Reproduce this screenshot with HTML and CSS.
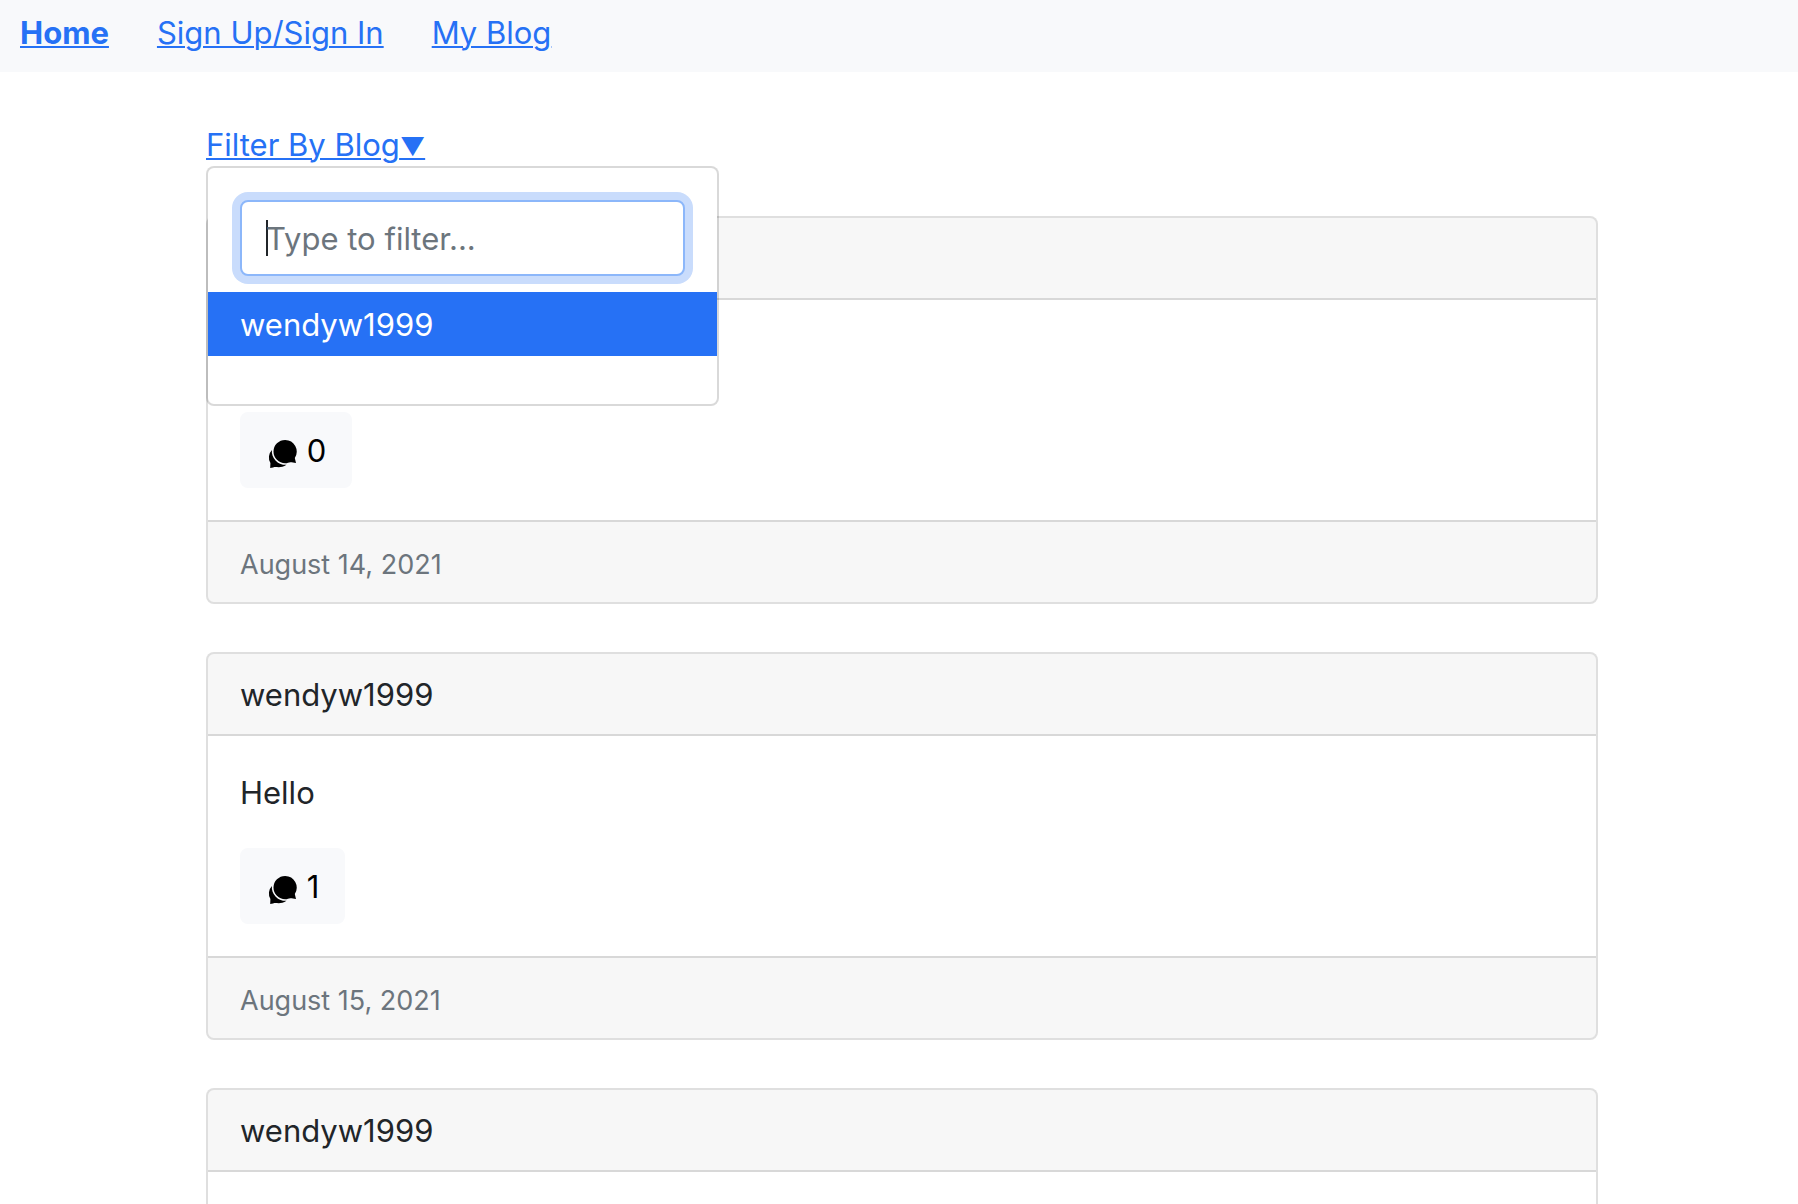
FILE: index.html
```html
<!DOCTYPE html>
<html lang="en">
<head>
  <meta charset="utf-8">
  <meta name="viewport" content="width=device-width, initial-scale=1">
  <title>Blogs</title>
  <link rel="stylesheet" href="styles.css">
</head>
<body>
  <svg class="sprite" aria-hidden="true">
    <symbol id="icon-chat" viewBox="1 0 32 32">
      <path d="M20.200 3.900A11.700 11.700 0 1 0 20.200 27.300C22.500 27.300 23.600 26.200 25.400 26.200C27 26.200 28.800 26.700 31 27L29.800 21.900A11.700 11.700 0 0 0 20.200 3.900Z"/>
      <path d="M6.900 13.900A11 11 0 0 0 5.400 27L5.200 32C7.200 31.700 9 31 10.500 31C12.500 31 17 32 21.500 28.800A13.600 13.600 0 0 1 6.900 13.900Z"/>
    </symbol>
  </svg>

  <nav class="topbar">
    <a class="topbar-link active" href="#">Home</a>
    <a class="topbar-link" href="#">Sign Up/Sign In</a>
    <a class="topbar-link" href="#">My Blog</a>
  </nav>

  <main class="container">
    <div class="dropdown">
      <a class="dropdown-toggle" href="#">Filter By Blog<span class="caret">▼</span></a>
      <div class="dropdown-menu">
        <input class="filter-input" type="text" placeholder="Type to filter..." aria-label="Filter blogs">
        <ul class="dropdown-list">
          <li><a class="dropdown-item active" href="#">wendyw1999</a></li>
        </ul>
      </div>
    </div>

    <article class="card">
      <header class="card-header">wendyw1999</header>
      <div class="card-body">
        <p class="card-text"></p>
        <button class="btn" type="button"><svg class="icon" aria-hidden="true"><use href="#icon-chat"/></svg> 0</button>
      </div>
      <footer class="card-footer">August 14, 2021</footer>
    </article>

    <article class="card">
      <header class="card-header">wendyw1999</header>
      <div class="card-body">
        <p class="card-text">Hello</p>
        <button class="btn" type="button"><svg class="icon" aria-hidden="true"><use href="#icon-chat"/></svg> 1</button>
      </div>
      <footer class="card-footer">August 15, 2021</footer>
    </article>

    <article class="card">
      <header class="card-header">wendyw1999</header>
      <div class="card-body">
        <p class="card-text"></p>
      </div>
    </article>
  </main>
</body>
</html>
```
FILE: styles.css
```css
*,
*::before,
*::after {
  box-sizing: border-box;
}

body {
  margin: 0;
  background: #fff;
  color: #212529;
  font-family: Inter, "Liberation Sans", sans-serif;
  font-size: 31px;
  line-height: 48px;
}

a {
  color: #2671f5;
  text-decoration: underline;
  text-decoration-thickness: 2px;
  text-underline-offset: 2px;
}

.sprite {
  display: none;
}

.topbar {
  display: flex;
  gap: 48px;
  padding: 9px 20px 15px;
  background: #f8f9fb;
}

.topbar-link.active {
  font-weight: 700;
}

.container {
  max-width: 1446px;
  margin: 0 auto;
  padding: 49px 24px 48px 30px;
}

.dropdown {
  position: relative;
  height: 48px;
  margin-bottom: 47px;
}

.caret {
  font-size: 25px;
  line-height: 1;
}

.dropdown-menu {
  position: absolute;
  top: 100%;
  left: 0;
  z-index: 10;
  width: 513px;
  margin-top: -3px;
  padding: 16px 0;
  border: 2px solid rgba(0, 0, 0, 0.15);
  border-radius: 8px;
  background: #fff;
  background-clip: padding-box;
}

.filter-input {
  display: block;
  width: calc(100% - 64px);
  height: 76px;
  margin: 16px 32px;
  padding: 12px 24px;
  border: 2px solid #8cb7fa;
  border-radius: 8px;
  outline: none;
  /* text cursor of the focused field */
  background: #fff linear-gradient(#212529, #212529) 24px 50% / 2px 36px no-repeat;
  box-shadow: 0 0 0 8px #c9dcfc;
  color: #212529;
  font: inherit;
}

.filter-input::placeholder {
  color: #6c757d;
  opacity: 1;
}

.dropdown-list {
  margin: 0 0 32px;
  padding: 0;
  list-style: none;
}

.dropdown-item {
  display: block;
  padding: 9px 32px 7px;
  text-decoration: none;
}

.dropdown-item.active {
  background: #2671f5;
  color: #fff;
}

.card {
  margin-bottom: 48px;
  border: 2px solid rgba(0, 0, 0, 0.125);
  border-radius: 8px;
  background: #fff;
}

.card-header,
.card-footer {
  padding: 17px 32px 15px;
  background: rgba(0, 0, 0, 0.03);
}

.card-header {
  border-bottom: 2px solid rgba(0, 0, 0, 0.125);
  border-radius: 6px 6px 0 0;
}

.card-footer {
  padding: 19px 32px 13px;
  border-top: 2px solid rgba(0, 0, 0, 0.125);
  border-radius: 0 0 6px 6px;
  color: #6c757d;
  font-size: 27px;
}

.card-body {
  padding: 33px 32px 32px;
}

.card-text {
  min-height: 48px;
  margin: 0 0 31px;
}

.btn {
  display: block;
  padding: 13px 24px 11px;
  border: 2px solid #f8f9fb;
  border-radius: 8px;
  background: #f8f9fb;
  color: #000;
  font: inherit;
}

.icon {
  width: 32px;
  height: 32px;
  vertical-align: -6px;
  fill: currentColor;
}
```
